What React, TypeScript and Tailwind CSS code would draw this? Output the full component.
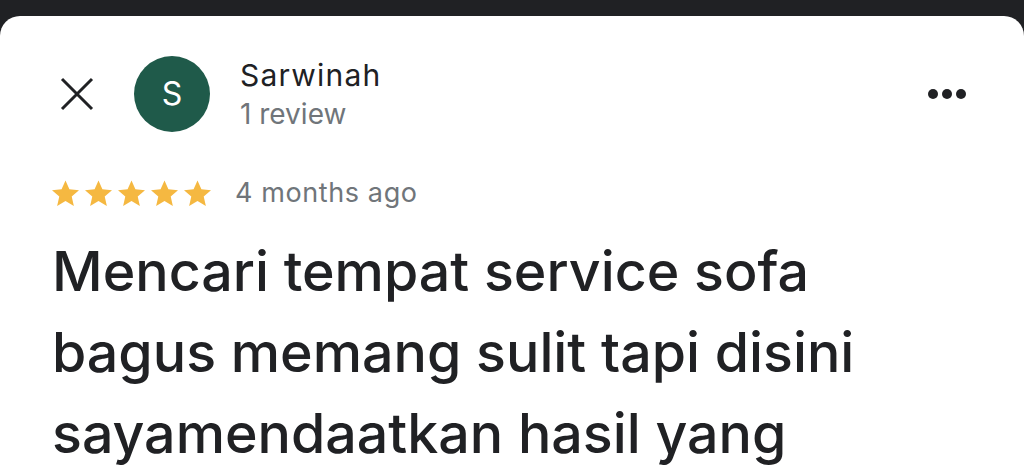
import React from "react";

function Star() {
  return (
    <svg viewBox="2 2 20 19" className="h-[26px] w-[27px]" fill="#f5b841">
      <path d="M12 2.2l2.9 6.6 7.1.6-5.4 4.7 1.6 7L12 17.4l-6.2 3.7 1.6-7L2 9.4l7.1-.6z" />
    </svg>
  );
}

export default function App() {
  return (
    <div
      className="w-[1024px] h-[473px] overflow-hidden bg-[#202124]"
      style={{ fontFamily: "Inter, Roboto, sans-serif" }}
    >
      <div className="mt-4 h-[457px] rounded-t-[20px] bg-white pl-[52px] pr-[58px] pt-[39px]">
        {/* header */}
        <div className="flex items-center">
          <svg viewBox="0 0 34 34" className="ml-[8px] h-[34px] w-[34px]" stroke="#202124" strokeWidth="3" fill="none">
            <path d="M2 2l30 30M32 2L2 32" />
          </svg>
          <div className="ml-[40px] flex h-[76px] w-[76px] items-center justify-center rounded-full bg-[#1f5a4a] text-[32px] text-white">
            S
          </div>
          <div className="ml-[30px] flex flex-col">
            <span className="text-[30px] leading-[40px] tracking-[1.2px] text-[#202124]">Sarwinah</span>
            <span className="text-[28px] leading-[38px] text-[#70757a]">1 review</span>
          </div>
          <div className="ml-auto flex gap-[4px]">
            <span className="h-[10px] w-[10px] rounded-full bg-[#202124]" />
            <span className="h-[10px] w-[10px] rounded-full bg-[#202124]" />
            <span className="h-[10px] w-[10px] rounded-full bg-[#202124]" />
          </div>
        </div>

        {/* rating */}
        <div className="mt-[40px] flex items-center">
          <div className="flex gap-[6px]">
            <Star />
            <Star />
            <Star />
            <Star />
            <Star />
          </div>
          <span className="ml-[24px] text-[27px] tracking-[0.6px] text-[#70757a]">4 months ago</span>
        </div>

        {/* body */}
        <p className="mt-[16px] w-[920px] text-[55.5px] leading-[81px] font-medium text-[#202124]">
          Mencari tempat service sofa
          <br />
          bagus memang sulit tapi disini
          <br />
          sayamendaatkan hasil yang
        </p>
      </div>
    </div>
  );
}
